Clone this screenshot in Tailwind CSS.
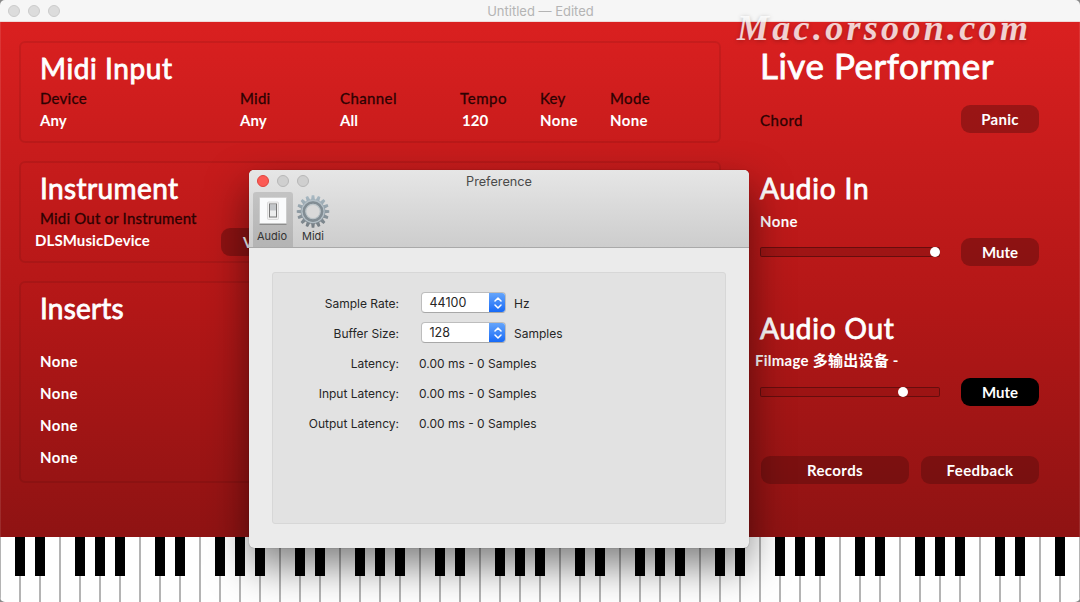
<!DOCTYPE html>
<html lang="en">
<head>
  <meta charset="UTF-8" />
  <meta name="viewport" content="width=device-width, initial-scale=1.0"/>
  <title>Live Performer</title>
  <script src="https://cdn.jsdelivr.net/npm/@tailwindcss/browser@4"></script>
</head>
<body class="bg-[#8a8a8a] w-[1080px] h-[602px] overflow-hidden">
  <div class="relative w-[1080px] h-[602px] rounded-[5px] overflow-hidden flex flex-col whitespace-nowrap font-[Lato,'Noto_Sans_CJK_SC',sans-serif]">

    <!-- Title bar -->
    <header class="h-[22px] shrink-0 bg-[#f6f6f6] border-b border-[#efd9d8] flex items-center">
      <div class="flex gap-2 pl-2">
        <span class="size-3 rounded-full bg-[#dcdcdc] border border-[#cbcbcb]"></span>
        <span class="size-3 rounded-full bg-[#dcdcdc] border border-[#cbcbcb]"></span>
        <span class="size-3 rounded-full bg-[#dcdcdc] border border-[#cbcbcb]"></span>
      </div>
      <div class="flex-1 pr-[59px] pt-px text-center text-[13px] leading-[22px] text-[#b4b4b4] font-[Inter,sans-serif]">Untitled — Edited</div>
    </header>

    <!-- Main panel -->
    <main class="h-[515px] shrink-0 flex bg-linear-to-b from-[#da2020] via-[#b31717] via-55% to-[#8f1313] text-white text-[15px] leading-[22px] font-bold border-x border-white/10">
      <div class="w-[702px] ml-[18px] pt-[19px] flex flex-col gap-[18px]">
        <section class="h-[102px] rounded-[6px] border-2 border-black/[0.08] pt-[9px] pl-[19px]">
          <h2 class="h-[35px] text-[28px] leading-[32px] font-normal tracking-[0.6px] [-webkit-text-stroke:0.8px_white]">Midi Input</h2>
          <div class="flex">
            <div class="w-[200px]"><div class="text-[#2c0202] font-normal tracking-[0.25px] [-webkit-text-stroke:0.3px_#2c0202]">Device</div><div class="tracking-[0.1px]">Any</div></div>
            <div class="w-[100px]"><div class="text-[#2c0202] font-normal tracking-[0.25px] [-webkit-text-stroke:0.3px_#2c0202]">Midi</div><div class="tracking-[0.1px]">Any</div></div>
            <div class="w-[120px]"><div class="text-[#2c0202] font-normal tracking-[0.4px] [-webkit-text-stroke:0.3px_#2c0202]">Channel</div><div>All</div></div>
            <div class="w-[80px]"><div class="text-[#2c0202] font-normal tracking-[0.6px] [-webkit-text-stroke:0.3px_#2c0202]">Tempo</div><div class="pl-[2px]">120</div></div>
            <div class="w-[70px]"><div class="text-[#2c0202] font-normal tracking-[0.25px] [-webkit-text-stroke:0.3px_#2c0202]">Key</div><div class="tracking-[0.4px]">None</div></div>
            <div><div class="text-[#2c0202] font-normal tracking-[0.4px] [-webkit-text-stroke:0.3px_#2c0202]">Mode</div><div class="tracking-[0.4px]">None</div></div>
          </div>
        </section>

        <section class="h-[102px] rounded-[6px] border-2 border-black/[0.08] pt-[9px] pl-[19px]">
          <h2 class="h-[35px] text-[28px] leading-[32px] font-normal tracking-[0.4px] [-webkit-text-stroke:0.8px_white]">Instrument</h2>
          <div class="text-[#2c0202] font-normal tracking-[0.2px] [-webkit-text-stroke:0.3px_#2c0202]">Midi Out or Instrument</div>
          <div class="-ml-[5px] h-[22px] flex items-center">
            <span class="w-[186px] tracking-[0.1px]">DLSMusicDevice</span>
            <span class="mt-[4px] w-[78px] h-[28px] leading-[28px] rounded-[9px] bg-black/25 pl-[22px]">V</span>
          </div>
        </section>

        <section class="h-[202px] rounded-[6px] border-2 border-black/[0.08] pt-[9px] pl-[19px]">
          <h2 class="h-[53px] text-[28px] leading-[32px] font-normal tracking-[0.2px] [-webkit-text-stroke:0.8px_white]">Inserts</h2>
          <div class="leading-[32px] tracking-[0.4px]">
            <div>None</div>
            <div>None</div>
            <div>None</div>
            <div>None</div>
          </div>
        </section>
      </div>

      <aside class="ml-[39px] w-[280px] pt-[23px]">
        <h1 class="h-[60px] text-[35px] leading-[40px] font-normal tracking-[0.5px] [-webkit-text-stroke:0.8px_white]">Live Performer</h1>
        <div class="flex h-[28px]">
          <div class="w-[201px] text-[#2c0202] font-normal tracking-[0.5px] leading-[31px] [-webkit-text-stroke:0.3px_#2c0202]">Chord</div>
          <div class="w-[78px] h-[28px] leading-[29px] rounded-[9px] bg-black/25 text-center tracking-[0.3px]">Panic</div>
        </div>

        <h2 class="mt-[40px] h-[37px] text-[28px] leading-[30px] font-normal tracking-[0.8px] [-webkit-text-stroke:0.8px_white]">Audio In</h2>
        <div class="tracking-[0.4px]">None</div>
        <div class="mt-[6px] flex h-[28px] items-center">
          <div class="w-[180px] h-[10px] rounded-[2px] border border-black/35 bg-black/15 flex items-center pl-[169px]"><span class="size-[10px] shrink-0 rounded-full bg-white"></span></div>
          <div class="ml-[21px] w-[78px] h-[28px] leading-[29px] rounded-[9px] bg-black/25 text-center">Mute</div>
        </div>

        <h2 class="mt-[47px] h-[36px] text-[28px] leading-[30px] font-normal tracking-[0.8px] [-webkit-text-stroke:0.8px_white]">Audio Out</h2>
        <div class="-ml-[5px] tracking-[0.25px]">Filmage 多输出设备 -</div>
        <div class="mt-[7px] flex h-[28px] items-center">
          <div class="w-[180px] h-[10px] rounded-[2px] border border-black/35 bg-black/5 flex items-center pl-[137px]"><span class="size-[10px] shrink-0 rounded-full bg-white"></span></div>
          <div class="ml-[21px] w-[78px] h-[28px] leading-[29px] rounded-[9px] bg-black text-center">Mute</div>
        </div>

        <div class="mt-[50px] flex gap-3 pl-px tracking-[0.4px]">
          <div class="w-[148px] h-[28px] leading-[29px] rounded-[9px] bg-black/20 text-center">Records</div>
          <div class="w-[118px] h-[28px] leading-[29px] rounded-[9px] bg-black/20 text-center">Feedback</div>
        </div>
      </aside>
    </main>

    <!-- Keyboard -->
    <svg id="keyboard" class="block shrink-0 bg-white" width="1080" height="65" viewBox="0 0 1080 65"></svg>

    <!-- Watermark -->
    <div class="absolute left-[737px] top-[8px] text-[36px] leading-[40px] font-bold italic tracking-[3.3px] text-white/80 font-['Liberation_Serif',serif] [text-shadow:0_1px_4px_rgba(0,0,0,0.25)]">Mac.orsoon.com</div>

    <!-- Preference window -->
    <div class="absolute left-[249px] top-[170px] w-[500px] h-[378px] rounded-[5px] overflow-hidden bg-[#ebebeb] flex flex-col text-[#262626] font-[Inter,sans-serif] shadow-[0_18px_40px_rgba(0,0,0,0.5),0_0_1px_rgba(0,0,0,0.5)]">
      <div class="h-[78px] shrink-0 bg-linear-to-b from-[#e6e6e6] to-[#cdcdcd] border-b border-[#a9a9a9] flex flex-col">
        <div class="h-[22px] flex items-center">
          <div class="flex gap-2 pl-2">
            <span class="size-3 rounded-full bg-[#fc5b55] border border-[#df443e]"></span>
            <span class="size-3 rounded-full bg-[#cfcfcf] border border-[#b7b7b7]"></span>
            <span class="size-3 rounded-full bg-[#cfcfcf] border border-[#b7b7b7]"></span>
          </div>
          <div class="flex-1 pr-[60px] pt-px text-center text-[12.7px] leading-[24px] text-[#4a4a4a]">Preference</div>
        </div>
        <div class="flex flex-1 pl-1 text-[11px] leading-[14px] text-[#333]">
          <div class="w-[40px] bg-black/12 rounded-t-[3px] flex flex-col items-center">
            <svg class="mt-1 block" width="32" height="32" viewBox="0 0 32 32">
              <rect x="2.5" y="2.5" width="27" height="26.5" fill="#8d8d8d"/>
              <rect x="2.5" y="1.5" width="27" height="26" fill="#fafbfc" stroke="#c9c9c9" stroke-width=".5"/>
              <rect x="10.5" y="6" width="11" height="17.5" rx="1" fill="#f0f0f0" stroke="#d3d3d3" stroke-width=".8"/>
              <rect x="12.5" y="8" width="7" height="13" fill="#eceded" stroke="#777" stroke-width="1"/>
              <rect x="13" y="8.5" width="6" height="6" fill="#c3c6c9"/>
            </svg>
            <span class="mt-px -ml-[2px]">Audio</span>
          </div>
          <div class="w-[40px] flex flex-col items-center">
            <svg class="mt-[3px] block" width="34" height="33" viewBox="-17 -16.5 34 33">
              <defs>
                <linearGradient id="steel" x1="0" y1="0" x2="0" y2="1">
                  <stop offset="0" stop-color="#a9bac4"/>
                  <stop offset="1" stop-color="#747c82"/>
                </linearGradient>
              </defs>
              <path id="gear" fill="url(#steel)"/>
              <circle r="11" fill="none" stroke="#b3bec5" stroke-width="1.4"/>
              <circle r="9" fill="none" stroke="#828d94" stroke-width="2.6"/>
              <circle r="7.2" fill="#d9d9d9" stroke="#bcc4c8" stroke-width="1.2"/>
            </svg>
            <span class="mt-px">Midi</span>
          </div>
        </div>
      </div>

      <div class="mt-[24px] ml-[23px] w-[454px] h-[252px] rounded-[3px] bg-[#e2e2e2] border border-[#d7d7d7] pt-[15px] text-[12px] leading-[31px]">
        <div class="flex h-[30px]">
          <div class="w-[126px] text-right">Sample Rate:</div>
          <div class="ml-[22px] mt-[4px] w-[85px] h-[21px] rounded-[4px] bg-white border border-[#bdbdbd] border-b-[#a8a8a8] flex overflow-hidden">
            <span class="w-[67px] shrink-0 pl-[7.5px] text-[12.5px] leading-[20px]">44100</span>
            <span class="-my-px -mr-px w-[17px] shrink-0 bg-linear-to-b from-[#68a7fb] to-[#0f66f6] flex items-center justify-center">
              <svg width="8" height="12" viewBox="0 0 8 12" fill="none" stroke="#fff" stroke-width="1.5" stroke-linecap="round" stroke-linejoin="round"><path d="M1 4 4 1 7 4M1 8 4 11 7 8"/></svg>
            </span>
          </div>
          <div class="ml-[8px]">Hz</div>
        </div>
        <div class="flex h-[30px]">
          <div class="w-[126px] text-right">Buffer Size:</div>
          <div class="ml-[22px] mt-[4px] w-[85px] h-[21px] rounded-[4px] bg-white border border-[#bdbdbd] border-b-[#a8a8a8] flex overflow-hidden">
            <span class="w-[67px] shrink-0 pl-[7.5px] text-[12.5px] leading-[20px]">128</span>
            <span class="-my-px -mr-px w-[17px] shrink-0 bg-linear-to-b from-[#68a7fb] to-[#0f66f6] flex items-center justify-center">
              <svg width="8" height="12" viewBox="0 0 8 12" fill="none" stroke="#fff" stroke-width="1.5" stroke-linecap="round" stroke-linejoin="round"><path d="M1 4 4 1 7 4M1 8 4 11 7 8"/></svg>
            </span>
          </div>
          <div class="ml-[8px]">Samples</div>
        </div>
        <div class="flex h-[30px]"><div class="w-[126px] text-right">Latency:</div><div class="ml-[20px]">0.00 ms - 0 Samples</div></div>
        <div class="flex h-[30px]"><div class="w-[126px] text-right">Input Latency:</div><div class="ml-[20px]">0.00 ms - 0 Samples</div></div>
        <div class="flex h-[30px]"><div class="w-[126px] text-right">Output Latency:</div><div class="ml-[20px]">0.00 ms - 0 Samples</div></div>
      </div>
    </div>
  </div>

  <script>
    // 54 white keys, 20px each; the octave starts at the left edge
    let keys = "";
    for (let k = 0; k <= 54; k++) {
      keys += `<rect x="${k * 20 - 1}" y="0" width="2" height="65" fill="#b4b4b4"/>`;
      if (k % 7 !== 0 && k % 7 !== 3 && k < 54) {
        keys += `<rect x="${k * 20 - 5}" y="0" width="10" height="39" fill="#000"/>`;
      }
    }
    document.getElementById("keyboard").innerHTML = keys;

    // gear teeth
    const teeth = 16;
    let d = "";
    for (let i = 0; i < teeth; i++) {
      const a = (i / teeth) * Math.PI * 2;
      [[-0.15, 12.3], [-0.08, 16.3], [0.08, 16.3], [0.15, 12.3]].forEach(([o, r]) => {
        d += `${d ? "L" : "M"}${(Math.sin(a + o) * r).toFixed(2)} ${(-Math.cos(a + o) * r).toFixed(2)}`;
      });
    }
    document.getElementById("gear").setAttribute("d", d + "Z");
  </script>
</body>
</html>
